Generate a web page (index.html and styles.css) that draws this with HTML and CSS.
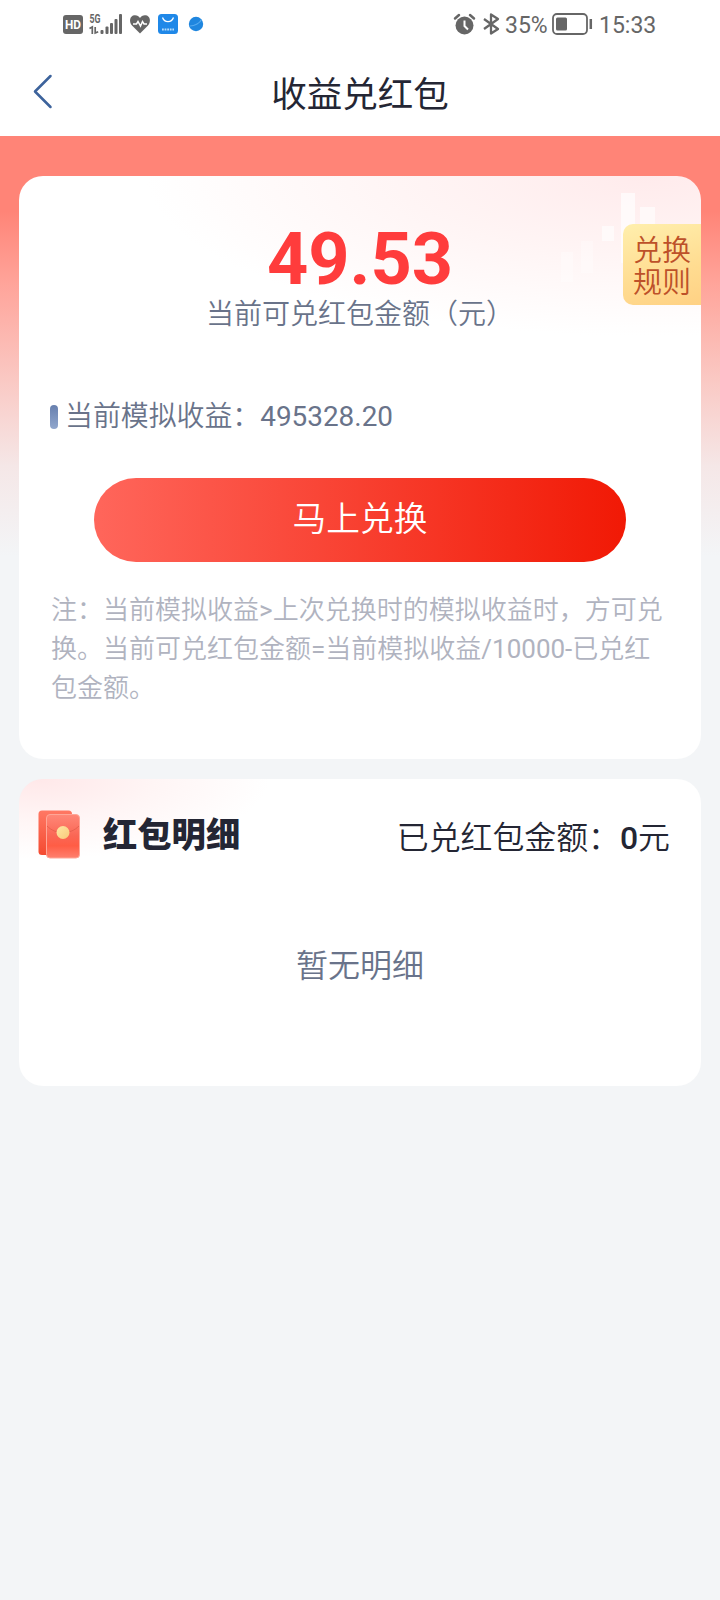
FILE: index.html
```html
<!DOCTYPE html>
<html lang="zh-CN">
<head>
<meta charset="utf-8">
<title>收益兑红包</title>
<link rel="stylesheet" href="styles.css">
</head>
<body>
<div class="status">
  <div class="status-left">
    <svg width="160" height="24" viewBox="0 0 160 24">
      <rect x="0" y="3" width="20" height="19" rx="3" fill="#666"/>
      <text x="10" y="17" class="hd" text-anchor="middle" textLength="16" lengthAdjust="spacingAndGlyphs">HD</text>
      <text x="26.5" y="10.5" class="net" textLength="11" lengthAdjust="spacingAndGlyphs">5G</text>
      <g stroke="#666" stroke-width="1.7" fill="none"><path d="M26.5 16.5L29.3 15V22M32.2 15V21L35.2 19.7"/></g>
      <g fill="#666"><rect x="37.5" y="18" width="3" height="4" rx="1"/><rect x="42.5" y="14.5" width="3" height="7.5" rx="1"/><rect x="47" y="11" width="3" height="11" rx="1"/><rect x="51.5" y="7" width="3" height="15" rx="1"/><rect x="56" y="2" width="3" height="20" rx="1"/></g>
      <path d="M77 21.500L69 13.500C65.500 9.500 67 3.500 71.500 3.200C74 3 76 4.300 77 6C78 4.300 80 3 82.500 3.200C87 3.500 88.500 9.500 85 13.500Z" fill="#666"/>
      <path d="M70 12H73.500L75 9.500L77.500 14L79.500 9.500L81 12H84" fill="none" stroke="#fff" stroke-width="1.500"/>
      <rect x="95" y="2" width="20" height="20" rx="3.500" fill="#1f88e8"/>
      <path d="M99.500 5.500C101.500 11 108.500 11 110.500 5.500" fill="none" stroke="#fff" stroke-width="1.300"/>
      <path d="M99 17.500H111" stroke="#b5dcfb" stroke-width="2" stroke-dasharray="1.800 .8"/>
      <circle cx="133" cy="12" r="7.200" fill="#1f86df"/>
      <path d="M127 14C132 14 137 11 138.500 7.500" fill="none" stroke="#55aaf0" stroke-width="1.200"/>
    </svg>
  </div>
  <div class="status-right">
    <svg width="48" height="24" viewBox="0 0 48 24">
      <circle cx="11.500" cy="13.500" r="9" fill="#666"/>
      <path d="M2 6.500L6 3M21 6.500L17 3" stroke="#666" stroke-width="2.500" stroke-linecap="round"/>
      <path d="M11.500 8.500V14L15 17.500" fill="none" stroke="#fff" stroke-width="2"/>
      <path d="M31 7L45 17L38 21.500V2.500L45 7L31 17" fill="none" stroke="#666" stroke-width="2.300" stroke-linejoin="round"/>
    </svg>
    <span class="percent">35%</span>
    <svg class="battery" width="42" height="22" viewBox="0 0 42 22">
      <rect x="1" y="1" width="34" height="20" rx="4" fill="none" stroke="#666" stroke-width="1.800"/>
      <rect x="4" y="4.500" width="11" height="13" rx="1.500" fill="#666"/>
      <path d="M38.800 6V16" stroke="#666" stroke-width="2.500"/>
    </svg>
    <span class="clock">15:33</span>
  </div>
</div>
<header class="nav">
  <svg class="back" width="20" height="36" viewBox="0 0 20 36"><path d="M17.500 2L2 17.500L17.500 33" fill="none" stroke="#3d639c" stroke-width="2.500" stroke-linecap="round" stroke-linejoin="round"/></svg>
  <h1 class="title">收益兑红包</h1>
</header>
<main class="page">
  <section class="card summary">
    <svg class="bars" width="150" height="120" viewBox="0 0 150 120"><g fill="#fff"><rect x="90" y="17" width="14" height="70" opacity=".65"/><rect x="109" y="31" width="15" height="60" opacity=".6"/><rect x="71" y="50" width="12" height="15" opacity=".6"/><rect x="50" y="65" width="12" height="32" opacity=".3"/><rect x="30" y="76" width="12" height="30" opacity=".3"/></g></svg>
    <button class="rules">兑换<br>规则</button>
    <div class="amount">49.53</div>
    <div class="label">当前可兑红包金额（元）</div>
    <div class="profit"><i class="mark"></i><span>当前模拟收益：<span class="num">495328.20</span></span></div>
    <button class="redeem">马上兑换</button>
    <p class="note">注：当前模拟收益<span class="num">&gt;</span>上次兑换时的模拟收益时，方可兑<br>换。当前可兑红包金额<span class="num">=</span>当前模拟收益<span class="num">/10000-</span>已兑红<br>包金额。</p>
  </section>
  <section class="card details">
    <div class="details-head">
      <svg class="envelope" width="42" height="49" viewBox="0 0 42 49">
        <defs>
          <linearGradient id="env" x1="0" y1="0" x2="0" y2="1"><stop stop-color="#ff8878"/><stop offset=".5" stop-color="#fa6654"/><stop offset=".72" stop-color="#ff5d45"/><stop offset="1" stop-color="#ff806f"/></linearGradient>
          <linearGradient id="rear" x1="0" y1="0" x2="0" y2="1"><stop stop-color="#ff7864"/><stop offset="1" stop-color="#f44a30"/></linearGradient>
          <linearGradient id="coin" x1="0" y1="0" x2="1" y2="1"><stop stop-color="#ffe7a4"/><stop offset="1" stop-color="#f8c879"/></linearGradient>
        </defs>
        <rect x=".5" y=".5" width="33.500" height="44.500" rx="3.500" fill="url(#rear)"/>
        <rect x="8.500" y="4.500" width="33" height="43.500" rx="3.500" fill="url(#env)" stroke="#ffa697" stroke-width="1"/>
        <path d="M9 16C18 25 32 25 41 16" fill="none" stroke="#e8604e" stroke-width="1"/>
        <circle cx="25" cy="22.500" r="6.500" fill="url(#coin)"/>
      </svg>
      <h2 class="heading">红包明细</h2>
      <div class="total">已兑红包金额：<span class="zero">0</span>元</div>
    </div>
    <div class="empty">暂无明细</div>
  </section>
</main>
</body>
</html>
```
FILE: styles.css
```css
* { box-sizing: border-box; }
body {
  margin: 0;
  min-height: 1600px;
  background: #f3f5f7;
  color: #242634;
  font-family: Roboto, "Noto Sans CJK SC", sans-serif;
  font-weight: 350;
}
svg { display: block; flex: none; }
button { border: 0; padding: 0; font-family: inherit; font-weight: 350; }
.num { font-weight: 400; }
.status {
  height: 50px;
  padding: 12px 63px 0;
  display: flex;
  justify-content: space-between;
  background: #fff;
}
.hd { font: 700 12px Roboto, sans-serif; fill: #fff; }
.net { font: 700 12px Roboto, sans-serif; fill: #666; }
.status-right {
  display: flex;
  height: 26px;
  width: 204px;
  color: #666;
  font-size: 23px;
  font-weight: 400;
  line-height: 28px;
}
.percent { width: 44px; margin-left: 4px; }
.battery { margin: 1px 5px 0 3px; }
.nav {
  height: 86px;
  padding: 0 33px;
  display: grid;
  grid-template-columns: 20px 1fr 20px;
  background: #fff;
}
.back { margin-top: 24px; }
.title {
  margin: 20px 0 0;
  text-align: center;
  font-size: 35.500px;
  font-weight: 400;
  line-height: 51px;
}
.page {
  padding: 40px 19px 0;
  display: flex;
  flex-direction: column;
  gap: 20px;
  background: linear-gradient(#ff8477 0, #ff8477 75px, #ffa399 145px, #fac9c4 245px, #f5e7e7 330px, #f3f5f7 420px);
}
.card { border-radius: 24px; background-color: #fff; }
.summary {
  height: 583px;
  position: relative;
  padding: 46px 31px 0;
  display: flex;
  flex-direction: column;
  background-image: radial-gradient(ellipse 500px 160px at 92% 0, #ffebec, #fff5f5 50%, #fff 100%);
}
.bars { position: absolute; right: 20px; top: 0; }
.rules {
  position: absolute;
  right: 0;
  top: 48px;
  width: 78px;
  height: 81px;
  padding-top: 4px;
  border-radius: 10px 0 0 10px;
  background: linear-gradient(165deg, #ffefad, #ffdc91 60%, #ffd184);
  color: #bd5129;
  font-size: 29px;
  line-height: 32px;
}
.amount {
  height: 73px;
  text-align: center;
  color: #ff3c3c;
  font-size: 72px;
  font-weight: 700;
  line-height: 75px;
}
.label {
  height: 40px;
  text-align: center;
  color: #69738a;
  font-size: 28px;
  line-height: 40px;
}
.profit {
  margin-top: 62px;
  height: 40px;
  display: flex;
  align-items: center;
  gap: 7px;
  color: #69738a;
  font-size: 27.900px;
  line-height: 40px;
}
.mark {
  width: 8px;
  height: 24px;
  border-radius: 4px;
  background: linear-gradient(#677fae, #91a7cd);
}
.redeem {
  margin: 41px 44px 0;
  height: 84px;
  padding-bottom: 8px;
  border-radius: 42px;
  background: linear-gradient(90deg, #ff665b, #f11905);
  color: #fff;
  font-size: 33.700px;
}
.note {
  margin: 29px 0 0 1px;
  white-space: nowrap;
  color: #b0b3bf;
  font-size: 26px;
  line-height: 39px;
}
.details {
  height: 307px;
  padding: 31px 31px 0 19px;
  background-image: radial-gradient(ellipse 230px 80px at 20px 0, #ffe8e9, #fff5f5 50%, #fff 100%);
}
.details-head { height: 50px; display: flex; align-items: center; }
.envelope { margin-bottom: 2px; }
.heading {
  margin: 0 auto 0 23px;
  font-size: 34.300px;
  font-weight: 900;
  line-height: 50px;
}
.total { padding-top: 5px; font-size: 31.900px; line-height: 50px; }
.zero { font-weight: 500; }
.empty {
  margin-top: 81px;
  padding-left: 12px;
  text-align: center;
  color: #69738a;
  font-size: 32px;
  line-height: 50px;
}
```
